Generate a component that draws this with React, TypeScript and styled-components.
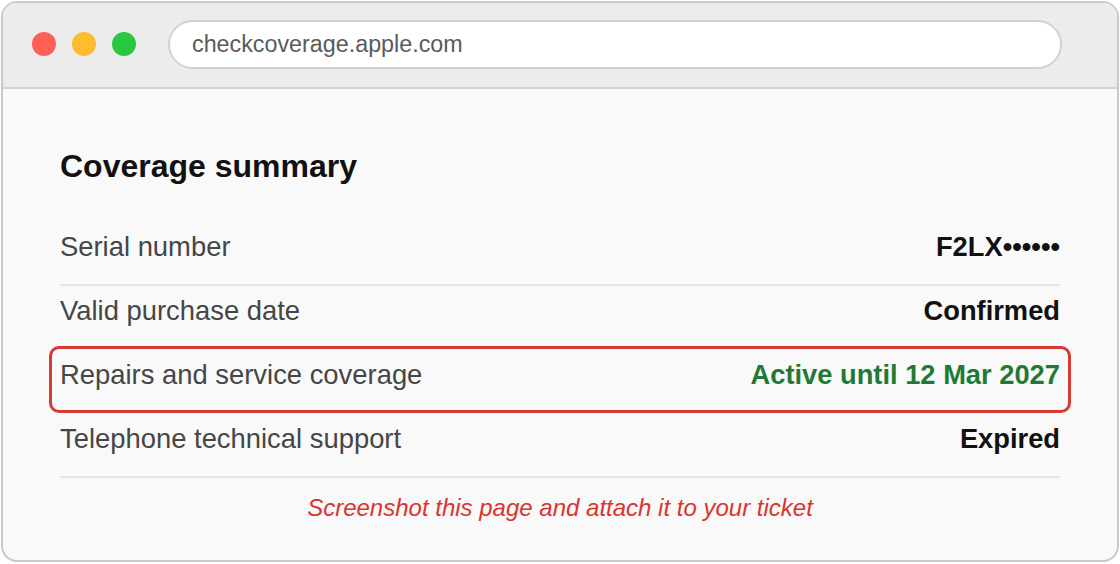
import React from "react";
import styled, { createGlobalStyle, css } from "styled-components";

const GlobalStyle = createGlobalStyle`
  html, body {
    margin: 0;
    padding: 0;
    background: #ffffff;
  }
  body {
    font-family: "Liberation Sans", Arial, Helvetica, sans-serif;
  }
  * { box-sizing: border-box; }
`;

const Frame = styled.div`
  margin: 1px;
  width: 1118px;
  height: 561px;
  border: 2px solid #c9c9c9;
  border-radius: 16px;
  overflow: hidden;
  background: #f9f9f9;
  display: flex;
  flex-direction: column;
`;

const TitleBar = styled.div`
  height: 86px;
  flex: none;
  display: flex;
  align-items: center;
  padding: 0 55px 2px 29px;
  background: #ececec;
  border-bottom: 2px solid #d3d3d3;
`;

const Lights = styled.div`
  display: flex;
  gap: 16px;
  margin-right: 32px;
`;

const Light = styled.span<{ $color: string }>`
  width: 24px;
  height: 24px;
  border-radius: 50%;
  background: ${(p) => p.$color};
`;

const UrlBar = styled.div`
  flex: 1;
  height: 49px;
  display: flex;
  align-items: center;
  padding-left: 22px;
  background: #ffffff;
  border: 2px solid #d2d2d2;
  border-radius: 25px;
  font-size: 23.3px;
  color: #5b5b5b;
`;

const Content = styled.main`
  flex: 1;
  padding: 58px 57px 0;
`;

const Heading = styled.h1`
  margin: 0 0 37px;
  font-size: 32px;
  line-height: 38px;
  font-weight: 700;
  color: #111111;
`;

const List = styled.div`
  border-bottom: 2px solid #e4e4e4;
`;

const Row = styled.div<{ $divider: boolean; $highlight: boolean }>`
  position: relative;
  display: flex;
  justify-content: space-between;
  align-items: baseline;
  padding: 9px 0 21px;
  line-height: 32px;
  border-top: 2px solid ${(p) => (p.$divider ? "#e4e4e4" : "transparent")};
  &:first-child {
    border-top: none;
  }
  ${(p) =>
    p.$highlight &&
    css`
      &::after {
        content: "";
        position: absolute;
        top: -4px;
        bottom: -1px;
        left: -11px;
        right: -11px;
        border: 3px solid #d83a33;
        border-radius: 10px;
        pointer-events: none;
      }
    `}
`;

const Label = styled.span`
  font-size: 27.4px;
  color: #464646;
`;

const Value = styled.span<{ $tone?: "ok" }>`
  font-size: 27.3px;
  font-weight: 700;
  color: ${(p) => (p.$tone === "ok" ? "#1f7a35" : "#111111")};
`;

const Note = styled.p`
  margin: 16px 0 0;
  text-align: center;
  font-size: 24px;
  line-height: 28px;
  font-style: italic;
  color: #d9352c;
`;

type Item = { label: string; value: string; tone?: "ok"; highlight?: boolean };

const items: Item[] = [
  { label: "Serial number", value: "F2LX••••••" },
  { label: "Valid purchase date", value: "Confirmed" },
  {
    label: "Repairs and service coverage",
    value: "Active until 12 Mar 2027",
    tone: "ok",
    highlight: true,
  },
  { label: "Telephone technical support", value: "Expired" },
];

export default function App() {
  return (
    <>
      <GlobalStyle />
      <Frame>
        <TitleBar>
          <Lights>
            <Light $color="#ff5f57" />
            <Light $color="#febc2e" />
            <Light $color="#28c840" />
          </Lights>
          <UrlBar>checkcoverage.apple.com</UrlBar>
        </TitleBar>
        <Content>
          <Heading>Coverage summary</Heading>
          <List>
            {items.map((it, i) => {
              const prevHl = i > 0 && !!items[i - 1].highlight;
              const divider = i > 0 && !it.highlight && !prevHl;
              return (
                <Row key={it.label} $divider={divider} $highlight={!!it.highlight}>
                  <Label>{it.label}</Label>
                  <Value $tone={it.tone}>{it.value}</Value>
                </Row>
              );
            })}
          </List>
          <Note>Screenshot this page and attach it to your ticket</Note>
        </Content>
      </Frame>
    </>
  );
}
